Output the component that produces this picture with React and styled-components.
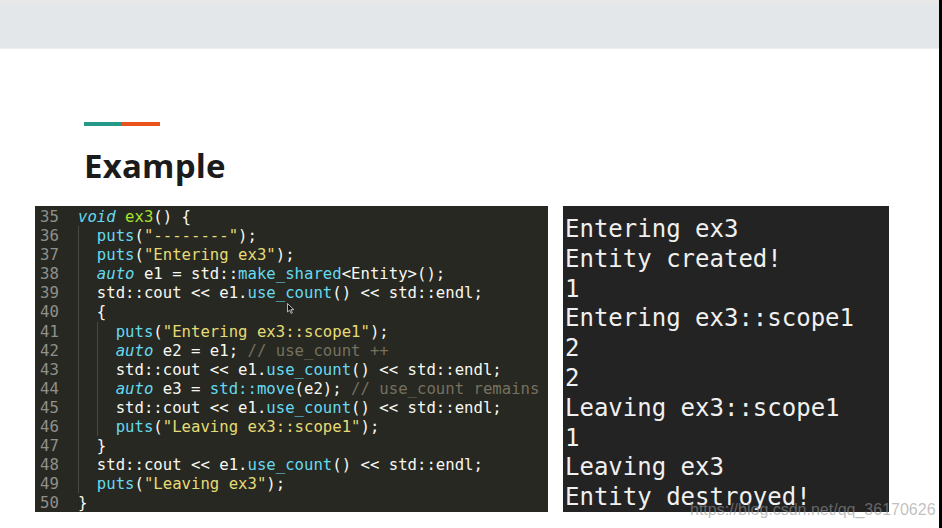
import React from 'react';
import styled, {createGlobalStyle} from 'styled-components';

const GlobalStyle = createGlobalStyle`
  html, body {
    margin: 0;
    padding: 0;
    background: #ffffff;
  }
  #root {
    width: 942px;
    height: 528px;
  }
`;

const codeLines = [
  {n: 35, indent: 0, tokens: [['k', 'void'], ['t', ' '], ['f', 'ex3'], ['t', '() {']]},
  {n: 36, indent: 1, tokens: [['c', 'puts'], ['t', '('], ['s', '"--------"'], ['t', ');']]},
  {n: 37, indent: 1, tokens: [['c', 'puts'], ['t', '('], ['s', '"Entering ex3"'], ['t', ');']]},
  {n: 38, indent: 1, tokens: [['k', 'auto'], ['t', ' e1 = std::'], ['c', 'make_shared'], ['t', '<Entity>();']]},
  {n: 39, indent: 1, tokens: [['t', 'std::cout << e1.'], ['c', 'use_count'], ['t', '() << std::endl;']]},
  {n: 40, indent: 1, tokens: [['t', '{']]},
  {n: 41, indent: 2, tokens: [['c', 'puts'], ['t', '('], ['s', '"Entering ex3::scope1"'], ['t', ');']]},
  {n: 42, indent: 2, tokens: [['k', 'auto'], ['t', ' e2 = e1; '], ['m', '// use_count ++']]},
  {n: 43, indent: 2, tokens: [['t', 'std::cout << e1.'], ['c', 'use_count'], ['t', '() << std::endl;']]},
  {n: 44, indent: 2, tokens: [['k', 'auto'], ['t', ' e3 = '], ['c', 'std::move'], ['t', '(e2); '], ['m', '// use_count remains']]},
  {n: 45, indent: 2, tokens: [['t', 'std::cout << e1.'], ['c', 'use_count'], ['t', '() << std::endl;']]},
  {n: 46, indent: 2, tokens: [['c', 'puts'], ['t', '('], ['s', '"Leaving ex3::scope1"'], ['t', ');']]},
  {n: 47, indent: 1, tokens: [['t', '}']]},
  {n: 48, indent: 1, tokens: [['t', 'std::cout << e1.'], ['c', 'use_count'], ['t', '() << std::endl;']]},
  {n: 49, indent: 1, tokens: [['c', 'puts'], ['t', '('], ['s', '"Leaving ex3"'], ['t', ');']]},
  {n: 50, indent: 0, tokens: [['t', '}']]},
];

const outputLines = [
  'Entering ex3',
  'Entity created!',
  '1',
  'Entering ex3::scope1',
  '2',
  '2',
  'Leaving ex3::scope1',
  '1',
  'Leaving ex3',
  'Entity destroyed!',
];

const App = () => {
  return (
    <Page>
      <GlobalStyle />
      <Main>
        <TopBar />
        <Content>
          <Heading>
            <Accent />
            <Title>Example</Title>
          </Heading>
          <Panels>
            <CodePanel>
              {codeLines.map((line) => (
                <CodeLine key={line.n}>
                  <LineNo>{line.n}</LineNo>
                  <CodeText>
                    {Array.from({length: line.indent}).map((_, i) => (
                      <Guide key={i}>{'  '}</Guide>
                    ))}
                    {line.tokens.map(([type, text], i) => (
                      <Token key={i} $type={type}>{text}</Token>
                    ))}
                  </CodeText>
                </CodeLine>
              ))}
              <Pointer width="8" height="11" viewBox="0 0 8 11">
                <path d="M0.5 0.5 L0.5 9 L2.6 7.1 L4.1 10.4 L5.4 9.8 L3.9 6.6 L6.8 6.6 Z" fill="#111" stroke="#ddd" strokeWidth="0.8" />
              </Pointer>
            </CodePanel>
            <OutputPanel>
              {outputLines.map((text, i) => (
                <OutputLine key={i}>{text}</OutputLine>
              ))}
            </OutputPanel>
          </Panels>
        </Content>
        <Watermark>https://blog.csdn.net/qq_36170626</Watermark>
      </Main>
      <EdgeStrip />
    </Page>
  );
};

export default App;

const Page = styled.div`
  display: flex;
  width: 942px;
  height: 528px;
  overflow: hidden;
  background: #ffffff;
`;

const Main = styled.div`
  position: relative;
  flex: 1;
  display: flex;
  flex-direction: column;
`;

const TopBar = styled.div`
  height: 44px;
  background: #e4e7ea;
  border-top: 4px solid #e8e8e8;
  border-bottom: 1px solid #eeeeee;
`;

const Content = styled.div`
  display: flex;
  flex-direction: column;
  padding: 73px 0 0 35px;
`;

const Heading = styled.div`
  display: flex;
  flex-direction: column;
  padding-left: 49px;
`;

const Accent = styled.div`
  width: 76px;
  height: 4px;
  background: linear-gradient(to right, #269a88 0 38px, #e9541c 38px 76px);
`;

const Title = styled.h1`
  margin: 18px 0 0;
  font-family: 'Open Sans', 'Lato', sans-serif;
  font-weight: 700;
  font-size: 33px;
  line-height: 44px;
  letter-spacing: 0.2px;
  color: #1b1b1b;
`;

const Panels = styled.div`
  display: flex;
  gap: 15px;
  margin-top: 18px;
`;

const CodePanel = styled.div`
  position: relative;
  width: 513px;
  height: 306px;
  padding-top: 1px;
  box-sizing: border-box;
  overflow: hidden;
  background: #272822;
  font-family: 'DejaVu Sans Mono', monospace;
  font-size: 15.65px;
`;

const CodeLine = styled.div`
  display: flex;
  height: 19.1px;
  line-height: 19.1px;
  white-space: pre;
`;

const LineNo = styled.span`
  flex: 0 0 43px;
  box-sizing: border-box;
  padding-left: 5px;
  color: #8f908a;
`;

const CodeText = styled.span`
  color: #f8f8f2;
`;

const Guide = styled.span`
  display: inline-block;
  box-shadow: inset 1px 0 0 #48483f;
`;

const tokenColors = {
  k: '#66d9ef',
  f: '#a6e22e',
  c: '#66d9ef',
  s: '#e6db74',
  m: '#75715e',
  t: '#f8f8f2',
};

const Token = styled.span`
  color: ${(p) => tokenColors[p.$type]};
  font-style: ${(p) => (p.$type === 'k' ? 'italic' : 'normal')};
`;

const Pointer = styled.svg`
  position: absolute;
  left: 252px;
  top: 97px;
`;

const OutputPanel = styled.div`
  width: 326px;
  height: 306px;
  box-sizing: border-box;
  padding: 9px 0 0 2px;
  overflow: hidden;
  background: #232323;
  font-family: 'DejaVu Sans Mono', monospace;
  font-size: 24px;
  color: #f0f0f0;
`;

const OutputLine = styled.div`
  height: 29.8px;
  line-height: 29.8px;
  white-space: pre;
`;

const Watermark = styled.div`
  position: absolute;
  left: 690px;
  top: 500px;
  font-family: 'Liberation Sans', Arial, sans-serif;
  font-size: 16px;
  line-height: 20px;
  color: rgba(150, 150, 150, 0.6);
  white-space: nowrap;
`;

const EdgeStrip = styled.div`
  flex: 0 0 3px;
  background: #000000;
`;
